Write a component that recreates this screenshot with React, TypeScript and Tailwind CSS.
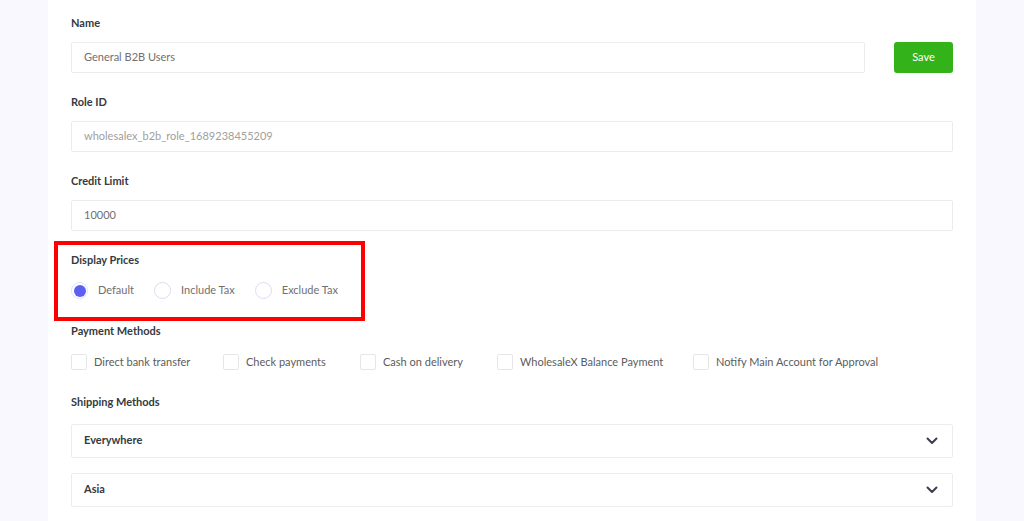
import React from "react";

const font = { fontFamily: 'Lato, "Open Sans", sans-serif' };

function Label({ children }: { children: React.ReactNode }) {
  return <div className="h-4 text-[11px] leading-4 font-bold text-[#343a40] whitespace-nowrap">{children}</div>;
}

function Chevron() {
  return (
    <svg width="12" height="8" viewBox="0 0 12 8" fill="none">
      <path d="M1.5 1.5 L6 6 L10.5 1.5" stroke="#3a3f4b" strokeWidth="2" strokeLinecap="round" strokeLinejoin="round" />
    </svg>
  );
}

function Radio({ checked, label }: { checked?: boolean; label: string }) {
  return (
    <div className="flex items-center whitespace-nowrap">
      {checked ? (
        <div className="w-[17px] h-[17px] rounded-full border border-[#e2e2fb] flex items-center justify-center">
          <div className="w-[12px] h-[12px] rounded-full bg-[#5d5ff3]" />
        </div>
      ) : (
        <div className="w-[17px] h-[17px] rounded-full border border-[#dcdcf2] bg-white" />
      )}
      <span className="ml-[10px] text-[11px] text-[#707070]">{label}</span>
    </div>
  );
}

function Check({ label, w }: { label: string; w: string }) {
  return (
    <div className={`flex items-center whitespace-nowrap ${w}`}>
      <div className="w-4 h-4 rounded-[2px] border border-[#e6e6e6] bg-white" />
      <span className="ml-[7px] text-[11px] text-[#5c5c5c]">{label}</span>
    </div>
  );
}

function Accordion({ title, className }: { title: string; className?: string }) {
  return (
    <div className={`h-[34px] border border-[#ededed] rounded-[2px] flex items-center justify-between pl-[12px] pr-[14px] ${className ?? ""}`}>
      <span className="text-[11px] font-bold text-[#343a40]">{title}</span>
      <Chevron />
    </div>
  );
}

export default function App() {
  return (
    <div className="w-[1024px] h-[521px] bg-[#f8f8fe] flex overflow-hidden" style={font}>
      <div className="ml-[48px] w-[928px] h-full bg-white pl-[23px] pr-[23px] pt-[15px]">
        <Label>Name</Label>
        <div className="mt-[11px] flex">
          <div className="w-[794px] h-[31px] border border-[#ececec] rounded-[2px] flex items-center pl-[12px] text-[11px] text-[#707070]">
            General B2B Users
          </div>
          <button className="ml-[29px] w-[59px] h-[31px] rounded-[3px] bg-[#33b21a] text-white text-[11px]">Save</button>
        </div>

        <div className="mt-[21px]"><Label>Role ID</Label></div>
        <div className="mt-[11px] h-[31px] border border-[#ececec] rounded-[2px] flex items-center pl-[12px] text-[11px] text-[#a0a0a0]">
          wholesalex_b2b_role_1689238455209
        </div>

        <div className="mt-[21px]"><Label>Credit Limit</Label></div>
        <div className="mt-[11px] h-[31px] border border-[#ececec] rounded-[2px] flex items-center pl-[12px] text-[11px] text-[#707070]">
          10000
        </div>

        <div className="mt-[10px] ml-[-17px] w-[311px] border-4 border-[#ff0000] pl-[13px] pt-[7px] pb-[18px]">
          <Label>Display Prices</Label>
          <div className="mt-[14px] flex items-center gap-[20px]">
            <Radio checked label="Default" />
            <Radio label="Include Tax" />
            <Radio label="Exclude Tax" />
          </div>
        </div>

        <div className="mt-[2px]"><Label>Payment Methods</Label></div>
        <div className="mt-[15px] flex items-center">
          <Check w="w-[152px]" label="Direct bank transfer" />
          <Check w="w-[137px]" label="Check payments" />
          <Check w="w-[137px]" label="Cash on delivery" />
          <Check w="w-[196px]" label="WholesaleX Balance Payment" />
          <Check w="" label="Notify Main Account for Approval" />
        </div>

        <div className="mt-[23px]"><Label>Shipping Methods</Label></div>
        <Accordion title="Everywhere" className="mt-[14px]" />
        <Accordion title="Asia" className="mt-[15px]" />
      </div>
    </div>
  );
}
